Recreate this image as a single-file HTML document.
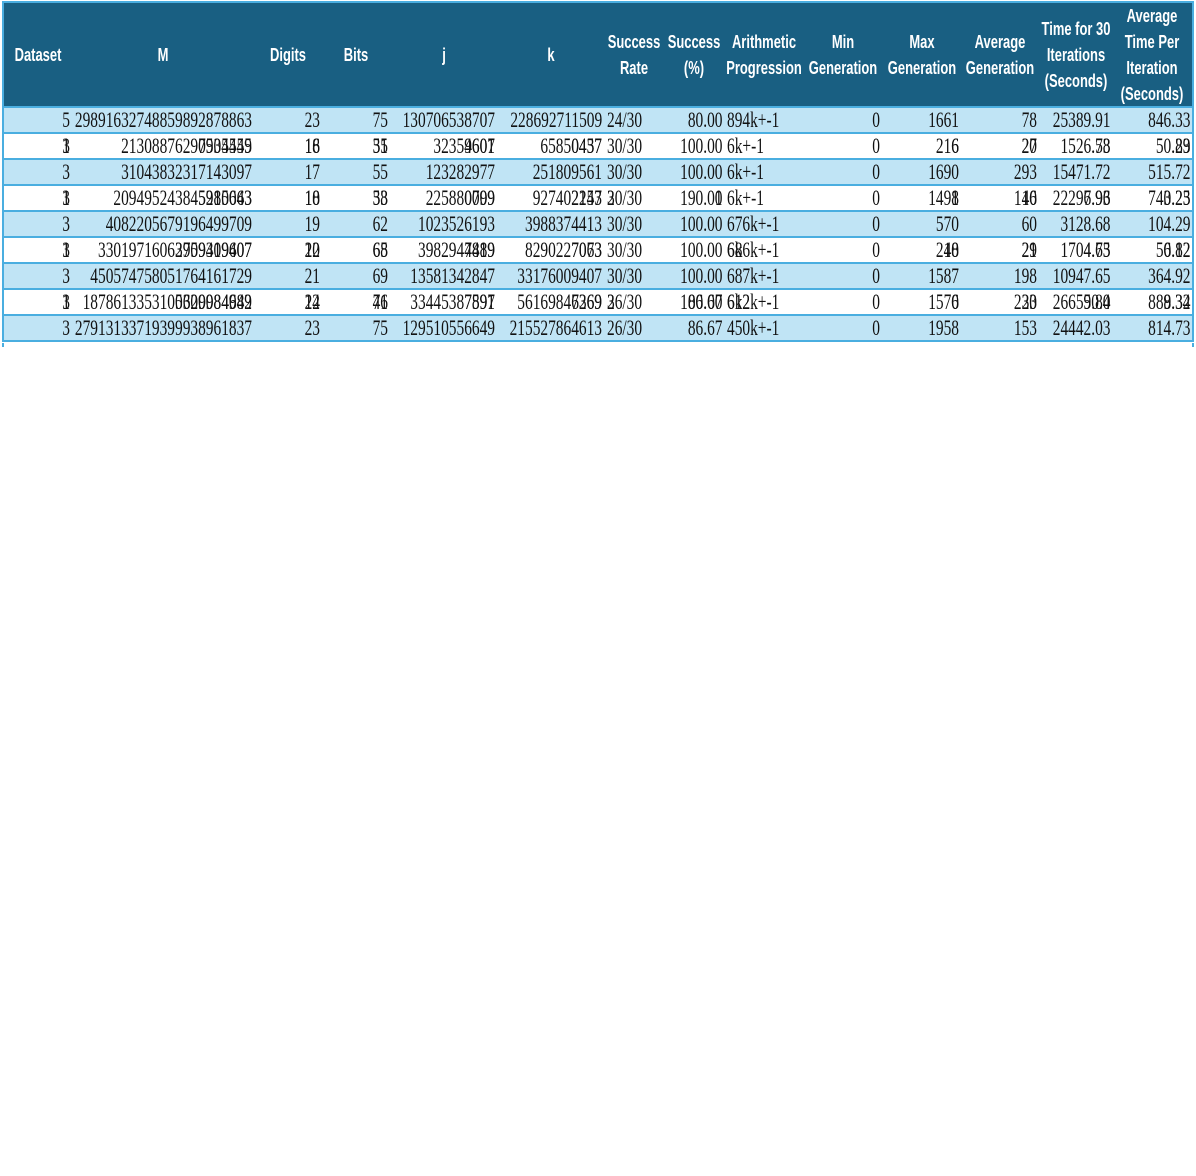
<!DOCTYPE html>
<html><head><meta charset="utf-8"><style>
body{margin:0;background:#fff;width:1196px;height:1176px;overflow:hidden;position:relative}
table{position:absolute;left:2px;top:1px;border-collapse:collapse;table-layout:fixed;width:1192px;border-left:2px solid #4aaee0;border-right:2px solid #4aaee0}
th{background:#195f82;color:#fff;font-family:"Liberation Sans Narrow","Liberation Sans",sans-serif;font-weight:bold;font-size:18px;line-height:26px;height:103px;padding:0;border-top:2px solid #4aaee0;border-bottom:2px solid #4aaee0;text-align:center;white-space:nowrap;position:relative}
th span{position:absolute;left:50%;top:50%;transform:translate(-50%,-50%) scaleX(.72);display:block}
td{height:24px;padding:0;border-bottom:2px solid #4aaee0;font-family:"Liberation Serif",serif;font-size:22px;color:#111;white-space:nowrap;position:relative;line-height:24px}
tr.a td{background:#c0e4f5}
tr.w td{background:#fff}
.n{position:absolute;right:2px;top:0;display:block;transform:scaleX(.70);transform-origin:right center}
td.l .n{right:auto;left:3px;transform-origin:left center}
.o .b{position:absolute;right:0;top:0}
td.l .o .b{left:0;right:auto}
.tail{position:absolute;left:2px;top:343px;width:1192px;height:4px;border-left:2px solid #4aaee0;border-right:2px solid #4aaee0;box-sizing:border-box}
</style></head><body>
<table>
<colgroup><col style="width:69px"><col style="width:182px"><col style="width:68px"><col style="width:68px"><col style="width:107px"><col style="width:107px"><col style="width:60px"><col style="width:60px"><col style="width:80px"><col style="width:78px"><col style="width:79px"><col style="width:78px"><col style="width:73px"><col style="width:81px"></colgroup>
<tr><th><span>Dataset</span></th><th><span>M</span></th><th><span>Digits</span></th><th><span>Bits</span></th><th><span>j</span></th><th><span>k</span></th><th><span>Success<br>Rate</span></th><th><span>Success<br>(%)</span></th><th><span>Arithmetic<br>Progression</span></th><th><span>Min<br>Generation</span></th><th><span>Max<br>Generation</span></th><th><span>Average<br>Generation</span></th><th><span>Time for 30<br>Iterations<br>(Seconds)</span></th><th><span>Average<br>Time Per<br>Iteration<br>(Seconds)</span></th></tr>
<tr class="a"><td><span class="n">5</span></td><td><span class="n">29891632748859892878863</span></td><td><span class="n">23</span></td><td><span class="n">75</span></td><td><span class="n">130706538707</span></td><td><span class="n">228692711509</span></td><td class="l"><span class="n">24/30</span></td><td><span class="n">80.00</span></td><td class="l"><span class="n">894k+-1</span></td><td><span class="n">0</span></td><td><span class="n">1661</span></td><td><span class="n">78</span></td><td><span class="n">25389.91</span></td><td><span class="n">846.33</span></td></tr>
<tr class="w"><td><span class="n o">3<span class="b">1</span></span></td><td><span class="n o">21308876290534559<span class="b">7905445</span></span></td><td><span class="n o">16<span class="b">18</span></span></td><td><span class="n o">55<span class="b">31</span></span></td><td><span class="n o">32359607<span class="b">4601</span></span></td><td><span class="n o">65850437<span class="b">0457</span></span></td><td class="l"><span class="n">30/30</span></td><td><span class="n">100.00</span></td><td class="l"><span class="n">6k+-1</span></td><td><span class="n">0</span></td><td><span class="n o">216<span class="b">6</span></span></td><td><span class="n o">27<span class="b">20</span></span></td><td><span class="n o">1526.58<span class="b">.73</span></span></td><td><span class="n o">50.89<span class="b">.23</span></span></td></tr>
<tr class="a"><td><span class="n">3</span></td><td><span class="n">31043832317143097</span></td><td><span class="n">17</span></td><td><span class="n">55</span></td><td><span class="n">123282977</span></td><td><span class="n">251809561</span></td><td class="l"><span class="n">30/30</span></td><td><span class="n">100.00</span></td><td class="l"><span class="n">6k+-1</span></td><td><span class="n">0</span></td><td><span class="n">1690</span></td><td><span class="n">293</span></td><td><span class="n">15471.72</span></td><td><span class="n">515.72</span></td></tr>
<tr class="w"><td><span class="n o">3<span class="b">1</span></span></td><td><span class="n o">209495243845280643<span class="b">5915063</span></span></td><td><span class="n o">18<span class="b">10</span></span></td><td><span class="n o">58<span class="b">33</span></span></td><td><span class="n o">225880099<span class="b">0709</span></span></td><td><span class="n o">927402143<span class="b">2257</span></span></td><td class="l"><span class="n o">30/30<span class="b">2</span></span></td><td><span class="n o">190.00<span class="b">1</span></span></td><td class="l"><span class="n">6k+-1</span></td><td><span class="n">0</span></td><td><span class="n o">1498<span class="b">1</span></span></td><td><span class="n o">140<span class="b">16</span></span></td><td><span class="n o">22296.96<span class="b">7.93</span></span></td><td><span class="n o">740.23<span class="b">3.25</span></span></td></tr>
<tr class="a"><td><span class="n">3</span></td><td><span class="n">4082205679196499709</span></td><td><span class="n">19</span></td><td><span class="n">62</span></td><td><span class="n">1023526193</span></td><td><span class="n">3988374413</span></td><td class="l"><span class="n">30/30</span></td><td><span class="n">100.00</span></td><td class="l"><span class="n">676k+-1</span></td><td><span class="n">0</span></td><td><span class="n">570</span></td><td><span class="n">60</span></td><td><span class="n">3128.68</span></td><td><span class="n">104.29</span></td></tr>
<tr class="w"><td><span class="n o">3<span class="b">1</span></span></td><td><span class="n o">33019716063909409407<span class="b">2759319607</span></span></td><td><span class="n o">20<span class="b">12</span></span></td><td><span class="n o">68<span class="b">65</span></span></td><td><span class="n o">3982944889<span class="b">7419</span></span></td><td><span class="n o">8290227063<span class="b">7073</span></span></td><td class="l"><span class="n">30/30</span></td><td><span class="n">100.00</span></td><td class="l"><span class="n o">686k+-1<span class="b">6k</span></span></td><td><span class="n">0</span></td><td><span class="n o">240<span class="b">18</span></span></td><td><span class="n o">29<span class="b">21</span></span></td><td><span class="n o">1704.63<span class="b">4.75</span></span></td><td><span class="n o">56.82<span class="b">0.12</span></span></td></tr>
<tr class="a"><td><span class="n">3</span></td><td><span class="n">450574758051764161729</span></td><td><span class="n">21</span></td><td><span class="n">69</span></td><td><span class="n">13581342847</span></td><td><span class="n">33176009407</span></td><td class="l"><span class="n">30/30</span></td><td><span class="n">100.00</span></td><td class="l"><span class="n">687k+-1</span></td><td><span class="n">0</span></td><td><span class="n">1587</span></td><td><span class="n">198</span></td><td><span class="n">10947.65</span></td><td><span class="n">364.92</span></td></tr>
<tr class="w"><td><span class="n o">3<span class="b">1</span></span></td><td><span class="n o">1878613353100620984989<span class="b">5309084642</span></span></td><td><span class="n o">22<span class="b">14</span></span></td><td><span class="n o">76<span class="b">41</span></span></td><td><span class="n o">33445387897<span class="b">7591</span></span></td><td><span class="n o">56169846369<span class="b">7269</span></span></td><td class="l"><span class="n o">26/30<span class="b">3</span></span></td><td><span class="n o">106.60<span class="b">80.07</span></span></td><td class="l"><span class="n o">612k+-1<span class="b">6k2</span></span></td><td><span class="n">0</span></td><td><span class="n o">1570<span class="b">6</span></span></td><td><span class="n o">220<span class="b">33</span></span></td><td><span class="n o">26659.84<span class="b">50.0</span></span></td><td><span class="n o">888.32<span class="b">9.34</span></span></td></tr>
<tr class="a"><td><span class="n">3</span></td><td><span class="n">27913133719399938961837</span></td><td><span class="n">23</span></td><td><span class="n">75</span></td><td><span class="n">129510556649</span></td><td><span class="n">215527864613</span></td><td class="l"><span class="n">26/30</span></td><td><span class="n">86.67</span></td><td class="l"><span class="n">450k+-1</span></td><td><span class="n">0</span></td><td><span class="n">1958</span></td><td><span class="n">153</span></td><td><span class="n">24442.03</span></td><td><span class="n">814.73</span></td></tr>
</table>
<div class="tail"></div>
</body></html>
